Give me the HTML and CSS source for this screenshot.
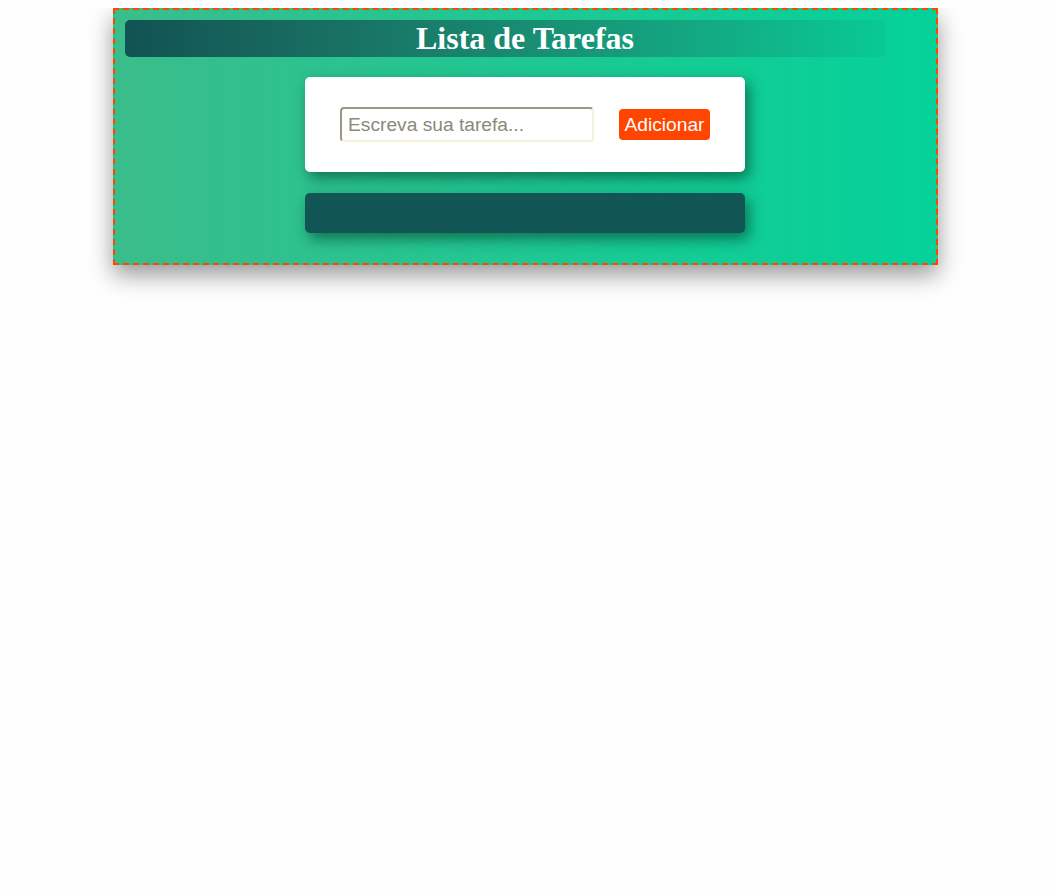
FILE: index.html
```html
<!DOCTYPE html>
<html lang="pt-BR">
<head>
<meta charset="utf-8">
<title>Lista de Tarefas</title>
<link rel="stylesheet" href="styles.css">
</head>
<body>
<div class="app">
  <h1 class="title">Lista de Tarefas</h1>
  <div class="form-card">
    <input class="task-input" type="text" placeholder="Escreva sua tarefa...">
    <button class="add-btn" type="button">Adicionar</button>
  </div>
  <div class="task-list"></div>
</div>
</body>
</html>
```

FILE: styles.css
```css
html {
  background: #fefefe;
  min-height: 100%;
}

body {
  margin: 8px;
  min-height: 860px;
  font-family: "Liberation Serif", serif;
}

.app {
  width: 800px;
  margin: 0 auto;
  padding: 10px 11px 30px 10px;
  border: 2px dashed #ff4500;
  background: linear-gradient(to right, #3abd8b, #04d299);
  box-shadow: 0 10px 22px rgba(0, 0, 0, 0.4);
  display: flex;
  flex-direction: column;
  align-items: center;
}

.title {
  align-self: stretch;
  margin: 0;
  height: 37px;
  line-height: 37px;
  font-size: 32px;
  font-weight: bold;
  color: #fff;
  text-align: center;
  border-radius: 5px;
  background-image: linear-gradient(to right, #115353, rgba(17, 83, 83, 0.06));
  background-size: 95% 100%;
  background-repeat: no-repeat;
}

.form-card {
  margin-top: 20px;
  width: 440px;
  box-sizing: border-box;
  padding: 30px 35px;
  background: #fff;
  border-radius: 5px;
  display: flex;
  align-items: center;
  justify-content: space-between;
  box-shadow: 4px 6px 14px rgba(6, 70, 52, 0.65);
}

.task-input {
  width: 254px;
  height: 35px;
  box-sizing: border-box;
  padding: 0 6px;
  border: 2px solid;
  border-color: #9b9785 #f5f0d8 #f5f0d8 #9b9785;
  border-radius: 4px;
  font-family: "Liberation Sans", Arial, sans-serif;
  font-size: 19.2px;
  color: #333;
  outline: none;
}

.task-input::placeholder {
  color: #8a8a7a;
}

.add-btn {
  width: 91px;
  height: 31px;
  padding: 0;
  border: none;
  border-radius: 4px;
  background: #ff4500;
  color: #fff;
  font-family: "Liberation Sans", Arial, sans-serif;
  font-size: 19.2px;
}

.task-list {
  margin-top: 21px;
  width: 440px;
  height: 40px;
  background: #115555;
  border-radius: 5px;
  box-shadow: 4px 6px 14px rgba(6, 70, 52, 0.65);
}
```
